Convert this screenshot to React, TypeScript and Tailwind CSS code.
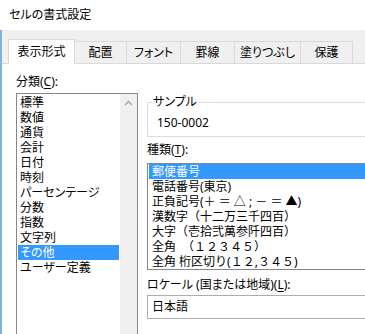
import React from "react";

const categories = [
  "標準",
  "数値",
  "通貨",
  "会計",
  "日付",
  "時刻",
  "パーセンテージ",
  "分数",
  "指数",
  "文字列",
  "その他",
  "ユーザー定義",
];

const types = [
  "郵便番号",
  "電話番号(東京)",
  "正負記号(＋ ＝ △ ; － ＝ ▲)",
  "漢数字（十二万三千四百）",
  "大字（壱拾弐萬参阡四百）",
  "全角　（１２３４５）",
  "全角 桁区切り(１２,３４５)",
];

export default function App() {
  return (
    <div className="w-[365px] h-[334px] overflow-hidden bg-[#f0f0f0] text-[12px] text-black font-['Noto_Sans','Noto_Sans_CJK_JP',sans-serif] [font-feature-settings:'palt'] flex flex-col">
      <div className="h-[30px] shrink-0 bg-white flex items-center pl-[9px]">セルの書式設定</div>
      <div className="flex-1 flex min-h-0">
        <div className="w-[2px] shrink-0 bg-[#7ab2ea]" />
        <div className="flex-1 flex flex-col min-w-0">
          <div className="h-[33px] shrink-0 flex items-end pl-[6px]">
            <div className="relative z-10 h-[25px] mb-[-1px] w-[67px] bg-white border-t border-l border-r border-[#d9d9d9] flex items-center justify-center">
              表示形式
            </div>
            <div className="-ml-px h-[22px] w-[53px] bg-[#f0f0f0] border-t border-l border-r border-[#d9d9d9] flex items-center justify-center">
              配置
            </div>
            <div className="-ml-px h-[22px] w-[55px] bg-[#f0f0f0] border-t border-l border-r border-[#d9d9d9] flex items-center justify-center">
              フォント
            </div>
            <div className="-ml-px h-[22px] w-[55px] bg-[#f0f0f0] border-t border-l border-r border-[#d9d9d9] flex items-center justify-center">
              罫線
            </div>
            <div className="-ml-px h-[22px] w-[67px] bg-[#f0f0f0] border-t border-l border-r border-[#d9d9d9] flex items-center justify-center">
              塗りつぶし
            </div>
            <div className="-ml-px h-[22px] w-[53px] shrink-0 bg-[#f0f0f0] border-t border-l border-r border-[#d9d9d9] flex items-center justify-center">
              保護
            </div>
          </div>
          <div className="flex-1 bg-white border-t border-[#d9d9d9] flex">
            {/* left column */}
            <div className="ml-[14px] mt-[10px] w-[122px] shrink-0 flex flex-col">
              <div className="h-[16px] leading-[16px]">
                分類(<span className="underline underline-offset-2">C</span>):
              </div>
              <div className="mt-[3px] h-[260px] border border-[#828790] flex">
                <div className="flex-1 p-[1px]">
                  {categories.map((c) => (
                    <div
                      key={c}
                      className={
                        c === "その他"
                          ? "h-[15px] leading-[15px] pl-[2px] bg-[#3399ff] text-white whitespace-nowrap"
                          : "h-[15px] leading-[15px] pl-[2px] whitespace-nowrap"
                      }
                    >
                      {c}
                    </div>
                  ))}
                </div>
                <div className="w-[17px] bg-[#f0f0f0] flex flex-col items-center">
                  <div className="h-[17px] flex items-center justify-center">
                    <svg width="9" height="6" viewBox="0 0 9 6">
                      <polyline points="1,5 4.5,1.5 8,5" fill="none" stroke="#a3a3a3" strokeWidth="1.3" />
                    </svg>
                  </div>
                </div>
              </div>
            </div>
            {/* right column */}
            <div className="ml-[9px] w-[260px] shrink-0 flex flex-col">
              <div className="relative mt-[38px] h-[35px] border border-[#dcdcdc]">
                <div className="absolute top-[-9px] left-[4px] px-[1px] bg-white leading-[16px]">サンプル</div>
                <div className="pt-[12px] pl-[9px] leading-[16px]">150-0002</div>
              </div>
              <div className="mt-[5px] h-[16px] leading-[16px]">
                種類(<span className="underline underline-offset-2">T</span>):
              </div>
              <div className="mt-[5px] h-[107px] border border-[#828790] px-[1px] [font-feature-settings:normal]">
                {types.map((t, i) => (
                  <div
                    key={t}
                    className={
                      i === 0
                        ? "h-[15px] leading-[15px] pl-[3px] bg-[#3399ff] text-white whitespace-nowrap"
                        : "h-[15px] leading-[15px] pl-[3px] whitespace-nowrap"
                    }
                  >
                    {t}
                  </div>
                ))}
              </div>
              <div className="mt-[7px] h-[16px] leading-[16px] whitespace-nowrap">
                ロケール (国または地域)(<span className="underline underline-offset-2">L</span>):
              </div>
              <div className="mt-[2px] h-[24px] border border-[#adadad] flex items-center pl-[4px]">日本語</div>
            </div>
          </div>
        </div>
      </div>
    </div>
  );
}
